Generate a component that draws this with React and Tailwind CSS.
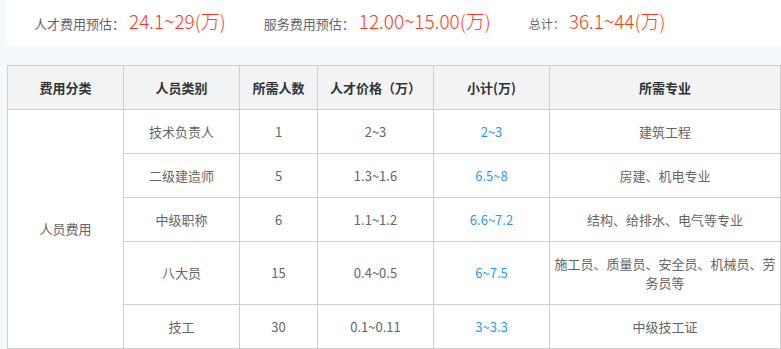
import React from 'react';

// 费用预估 + 人员费用明细表
const rows = [
    { role: '技术负责人', count: '1', price: '2~3', subtotal: '2~3', major: '建筑工程', h: 'h-[44px]' },
    { role: '二级建造师', count: '5', price: '1.3~1.6', subtotal: '6.5~8', major: '房建、机电专业', h: 'h-[44px]' },
    { role: '中级职称', count: '6', price: '1.1~1.2', subtotal: '6.6~7.2', major: '结构、给排水、电气等专业', h: 'h-[44px]' },
    { role: '八大员', count: '15', price: '0.4~0.5', subtotal: '6~7.5', major: '施工员、质量员、安全员、机械员、劳务员等', h: 'h-[63px]' },
    { role: '技工', count: '30', price: '0.1~0.11', subtotal: '3~3.3', major: '中级技工证', h: 'h-[44px]' },
];

const Estimate = ({ label, value, small }) => (
    <div className="flex items-baseline">
        <span className={`${small ? 'text-[12px]' : 'text-[13px]'} text-[#666]`}>{label}</span>
        <span className="text-[19px] font-light text-[#ff3a1a] ml-[4px]">{value}</span>
    </div>
);

const App = () => {
    const cell = 'border border-[#cfcfcf] text-center align-middle';

    return (
        <div
            className="min-h-screen bg-[#f5f9fc] pl-[7px] pb-[1px]"
            style={{ fontFamily: '"Noto Sans CJK SC", "Noto Sans", sans-serif' }}
        >
            {/* TOP SUMMARY */}
            <div className="h-[46px] bg-white flex items-center gap-[38px] pl-[27px] pb-[4px]">
                <Estimate label="人才费用预估：" value="24.1~29(万)" />
                <Estimate label="服务费用预估：" value="12.00~15.00(万)" />
                <Estimate label="总计：" value="36.1~44(万)" small />
            </div>

            {/* TABLE */}
            <table className="mt-[19px] w-[774px] border-collapse table-fixed text-[13px]">
                <colgroup>
                    <col className="w-[116px]" />
                    <col className="w-[116px]" />
                    <col className="w-[78px]" />
                    <col className="w-[116px]" />
                    <col className="w-[116px]" />
                    <col />
                </colgroup>
                <thead>
                    <tr className="h-[44px] bg-[#f2f3f5] text-[#333] font-bold">
                        <th className={cell}>费用分类</th>
                        <th className={cell}>人员类别</th>
                        <th className={cell}>所需人数</th>
                        <th className={cell}>人才价格（万）</th>
                        <th className={cell}>小计(万)</th>
                        <th className={cell}>所需专业</th>
                    </tr>
                </thead>
                <tbody className="bg-white text-[#666]">
                    {rows.map((r, i) => (
                        <tr key={r.role} className={r.h}>
                            {i === 0 && (
                                <td className={cell} rowSpan={rows.length}>人员费用</td>
                            )}
                            <td className={cell}>{r.role}</td>
                            <td className={cell}>{r.count}</td>
                            <td className={cell}>{r.price}</td>
                            <td className={`${cell} text-[#1e9bff]`}>{r.subtotal}</td>
                            <td className={`${cell} px-[4px] leading-[19px]`}>{r.major}</td>
                        </tr>
                    ))}
                </tbody>
            </table>
        </div>
    );
};

export default App;
